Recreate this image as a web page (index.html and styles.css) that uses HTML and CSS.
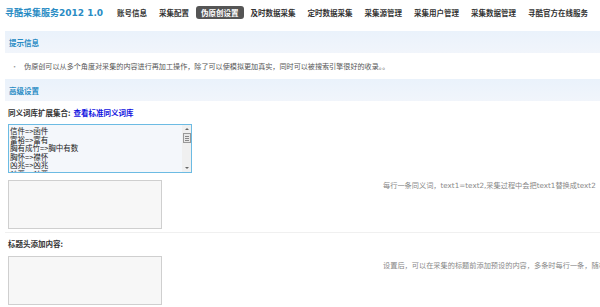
FILE: index.html
```html
<!DOCTYPE html>
<html lang="zh">
<head>
<meta charset="utf-8">
<link rel="stylesheet" href="styles.css">
</head>
<body>
<header class="top">
  <div class="brand">寻酷采集服务2012 1.0</div>
  <nav class="nav">
    <a class="nav-item">账号信息</a>
    <a class="nav-item">采集配置</a>
    <a class="nav-item active">伪原创设置</a>
    <a class="nav-item">及时数据采集</a>
    <a class="nav-item">定时数据采集</a>
    <a class="nav-item">采集源管理</a>
    <a class="nav-item">采集用户管理</a>
    <a class="nav-item">采集数据管理</a>
    <a class="nav-item">寻酷官方在线服务</a>
  </nav>
</header>
<main class="main">
  <div class="bar"><span class="bar-title">提示信息</span></div>
  <div class="tip"><span class="dot">•</span>伪原创可以从多个角度对采集的内容进行再加工操作，除了可以使模拟更加真实，同时可以被搜索引擎很好的收录。。</div>
  <div class="bar"><span class="bar-title">高级设置</span></div>
  <div class="label">同义词库扩展集合: <a class="link">查看标准同义词库</a></div>
  <div class="syn">
    <div class="syn-text">信件=>函件<br>富裕=>富有<br>胸有成竹=>胸中有数<br>胸怀=>襟怀<br>凶兆=>凶兆<br>凶恶=>凶恶</div>
    <div class="sb">
      <span class="sb-up"></span>
      <span class="sb-thumb"><i></i><i></i><i></i></span>
      <span class="sb-down"></span>
    </div>
  </div>
  <div class="row">
    <div class="box"></div>
    <div class="help">每行一条同义词，text1=text2,采集过程中会把text1替换成text2</div>
  </div>
  <div class="sep"></div>
  <div class="label label2">标题头添加内容:</div>
  <div class="row row2">
    <div class="box"></div>
    <div class="help">设置后，可以在采集的标题前添加预设的内容，多条时每行一条，随机</div>
  </div>
</main>
</body>
</html>
```
FILE: styles.css
```css
* { box-sizing: border-box; }
html, body { margin: 0; padding: 0; }
body {
  width: 600px;
  height: 307px;
  overflow: hidden;
  background: #fff;
  font-family: "Noto Sans CJK SC", "Noto Sans", sans-serif;
  font-size: 7.5px;
  color: #333;
}
.top {
  display: flex;
  align-items: center;
  height: 25px;
  padding: 0 0 0 5px;
}
.brand {
  width: 112px;
  flex: none;
  font-family: "DejaVu Sans", "Noto Sans CJK SC", sans-serif;
  font-weight: bold;
  font-size: 9px;
  color: #2a8cc4;
  white-space: nowrap;
}
.nav { display: flex; align-items: center; gap: 12px; white-space: nowrap; }
.nav-item {
  color: #333;
  font-weight: bold;
  line-height: 13px;
}
.nav-item.active {
  background: #555;
  color: #fff;
  border-radius: 3px;
  padding: 0 5px;
  margin: 0 -5px;
}
.main { padding: 6px 0 0 5px; }
.bar {
  height: 22px;
  display: flex;
  align-items: center;
  padding-left: 4px;
  background: linear-gradient(#eaf2fb, #f1f5fb);
}
.bar-title { color: #2a8cc4; font-weight: bold; }
.tip {
  height: 26px;
  display: flex;
  align-items: center;
  padding-left: 6px;
  color: #555;
  font-size: 7.1px;
  white-space: nowrap;
}
.dot { color: #999; margin-right: 6px; }
.label {
  height: 21px;
  display: flex;
  align-items: center;
  padding-left: 3px;
  font-weight: bold;
  color: #333;
  margin-top: 1px;
}
.link { color: #1010e0; margin-left: 3px; }
.syn {
  margin: 1px 0 0 3px;
  width: 184px;
  height: 49px;
  display: flex;
  border: 1px solid #6cbbe3;
  background: #f4f7fb;
}
.syn-text {
  flex: 1;
  overflow: hidden;
  line-height: 8.5px;
  padding: 2px 0 0 1px;
  color: #222;
}
.sb {
  width: 9px;
  display: flex;
  flex-direction: column;
  align-items: center;
  padding: 3px 0;
  background: #f0f0f0;
}
.sb-up, .sb-down {
  width: 0; height: 0;
  border-left: 2px solid transparent;
  border-right: 2px solid transparent;
}
.sb-up { border-bottom: 2px solid #666; }
.sb-down { border-top: 2px solid #666; margin-top: auto; }
.sb-thumb {
  margin-top: 3px;
  width: 8px;
  height: 10px;
  border: 1px solid #999;
  background: #e8e8e8;
  display: flex;
  flex-direction: column;
  justify-content: center;
  gap: 1px;
  padding: 0 1px;
}
.sb-thumb i { display: block; height: 1px; background: #888; }
.row {
  display: flex;
  align-items: flex-start;
  margin: 7px 0 0 3px;
}
.row2 { margin-top: 2px; }
.box {
  width: 154px;
  height: 49px;
  flex: none;
  border: 1px solid #cfcfcf;
  background: #f7f7f7;
}
.help {
  margin-left: 221px;
  color: #888;
  font-family: "DejaVu Sans", "Noto Sans CJK SC", sans-serif;
  font-size: 7.2px;
  white-space: nowrap;
  line-height: 11px;
}
.row2 .help { margin-top: 4px; }
.sep { height: 1px; background: #f0f0f0; margin-top: 3px; }
.label2 { margin-top: 0; }
```
